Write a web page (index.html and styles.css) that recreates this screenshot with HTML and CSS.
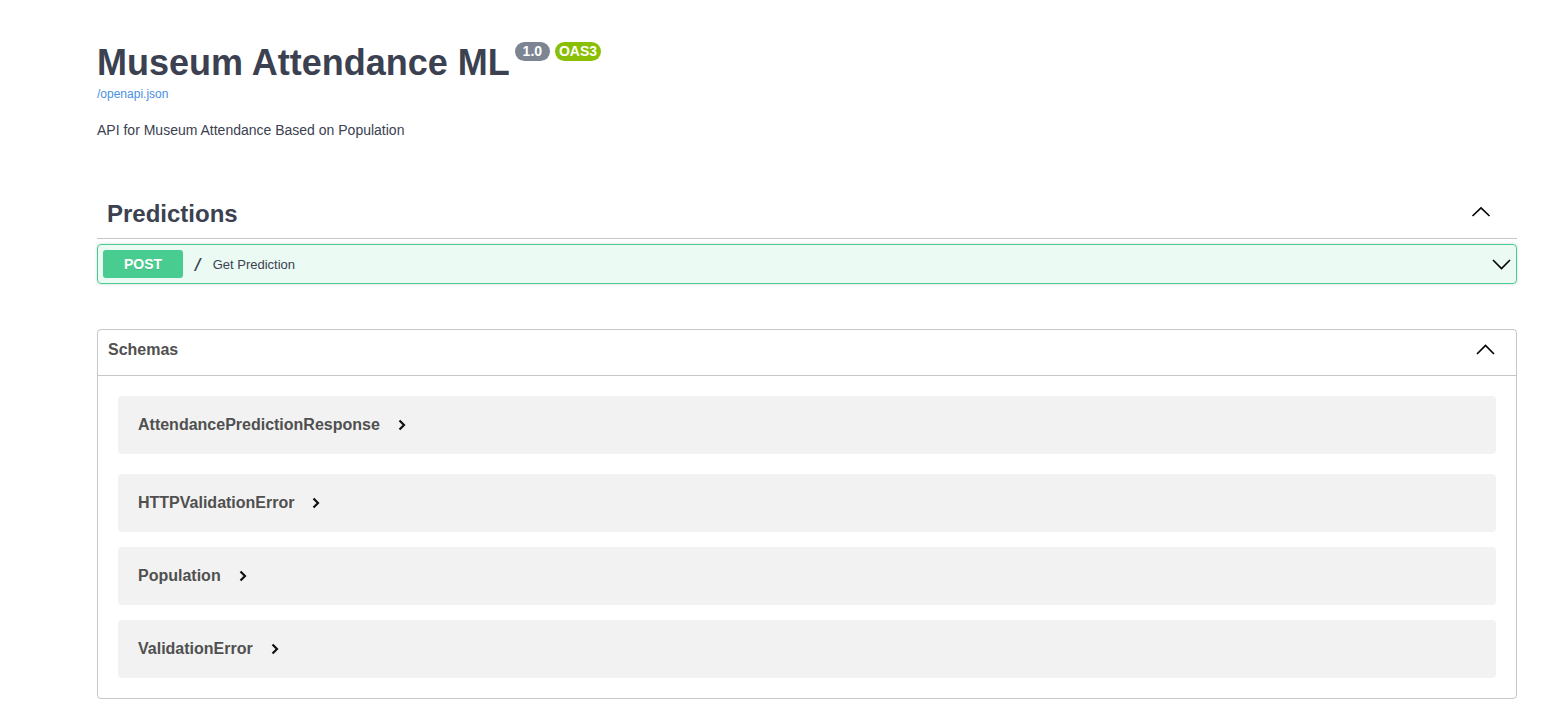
FILE: index.html
```html
<!DOCTYPE html>
<html lang="en">
<head>
<meta charset="utf-8">
<title>Museum Attendance ML - Swagger UI</title>
<link rel="stylesheet" href="styles.css">
</head>
<body>
<div class="wrapper">
  <div class="info">
    <h2 class="title">Museum Attendance ML<span class="badge badge-version"> 1.0 </span><span class="badge badge-oas">OAS3</span></h2>
    <a class="link" href="#">/openapi.json</a>
    <p class="desc">API for Museum Attendance Based on Population</p>
  </div>

  <div class="tag-section">
    <div class="tag-header">
      <h3 class="tag-name">Predictions</h3>
      <svg class="chev" width="20" height="20" viewBox="0 0 20 20"><polyline points="1.5,12 10,3.8 18.5,12" fill="none" stroke="#000" stroke-width="1.6"/></svg>
    </div>
    <div class="opblock">
      <span class="method">POST</span>
      <span class="path">/</span>
      <span class="summary">Get Prediction</span>
      <svg class="chev chev-end" width="20" height="20" viewBox="0 0 20 20"><polyline points="2,6 10.5,14.5 19,6" fill="none" stroke="#000" stroke-width="1.6"/></svg>
    </div>
  </div>

  <section class="models">
    <div class="models-header">
      <h4 class="models-title">Schemas</h4>
      <svg class="chev" width="20" height="20" viewBox="0 0 20 20"><polyline points="1,14 9.5,5.5 18,14" fill="none" stroke="#000" stroke-width="1.6"/></svg>
    </div>
    <div class="models-body">
      <div class="model first">
        <span class="model-title">AttendancePredictionResponse</span>
        <svg class="toggle" width="8" height="12" viewBox="0 0 8 12"><polyline points="1.5,1.5 6,6 1.5,10.5" fill="none" stroke="#111" stroke-width="2.2"/></svg>
      </div>
      <div class="model">
        <span class="model-title">HTTPValidationError</span>
        <svg class="toggle" width="8" height="12" viewBox="0 0 8 12"><polyline points="1.5,1.5 6,6 1.5,10.5" fill="none" stroke="#111" stroke-width="2.2"/></svg>
      </div>
      <div class="model">
        <span class="model-title">Population</span>
        <svg class="toggle" width="8" height="12" viewBox="0 0 8 12"><polyline points="1.5,1.5 6,6 1.5,10.5" fill="none" stroke="#111" stroke-width="2.2"/></svg>
      </div>
      <div class="model">
        <span class="model-title">ValidationError</span>
        <svg class="toggle" width="8" height="12" viewBox="0 0 8 12"><polyline points="1.5,1.5 6,6 1.5,10.5" fill="none" stroke="#111" stroke-width="2.2"/></svg>
      </div>
    </div>
  </section>
</div>
</body>
</html>
```
FILE: styles.css
```css
html, body {
  margin: 0;
  padding: 0;
  background: #fff;
}

body {
  font-family: "Liberation Sans", Arial, sans-serif;
  color: #3b4151;
}

.wrapper {
  width: 1420px;
  margin-left: 97px;
  padding-top: 42px;
  padding-bottom: 14px;
}

.info {
  display: flex;
  flex-direction: column;
  align-items: flex-start;
}

.title {
  margin: 0;
  font-size: 36px;
  line-height: 41px;
  font-weight: 700;
  color: #3b4151;
}

.badge {
  display: inline-block;
  vertical-align: top;
  margin-left: 5px;
  padding: 1px 4px 2px;
  font-size: 14px;
  line-height: 16px;
  font-weight: 700;
  color: #fff;
  border-radius: 57px;
  white-space: pre;
}

.badge-version {
  background: #7d8492;
}

.badge-oas {
  background: #89bf04;
}

.link {
  margin-top: 4px;
  font-size: 12px;
  line-height: 14px;
  color: #4990e2;
  text-decoration: none;
}

.desc {
  margin: 19px 0 0;
  font-size: 14px;
  line-height: 20px;
  color: #3b4151;
}

.tag-section {
  margin-top: 50px;
}

.tag-header {
  display: flex;
  align-items: center;
  justify-content: space-between;
  padding: 10px 26px 10px 10px;
  border-bottom: 1px solid rgba(59, 65, 81, 0.3);
  margin-bottom: 5px;
}

.tag-name {
  margin: 0;
  font-size: 24px;
  line-height: 28px;
  font-weight: 700;
  color: #3b4151;
}

.chev {
  display: block;
  flex: none;
}

.opblock {
  display: flex;
  align-items: center;
  padding: 5px;
  border: 1px solid #49cc90;
  border-radius: 4px;
  background: rgba(73, 204, 144, 0.1);
  box-shadow: 0 0 3px rgba(0, 0, 0, 0.19);
}

.method {
  width: 80px;
  height: 28px;
  line-height: 28px;
  text-align: center;
  background: #49cc90;
  color: #fff;
  font-size: 14px;
  font-weight: 700;
  border-radius: 3px;
  text-shadow: 0 1px 0 rgba(0, 0, 0, 0.1);
}

.path {
  padding: 0 10px;
  font-family: "DejaVu Sans Mono", monospace;
  font-size: 16px;
  font-weight: 600;
  color: #3b4151;
}

.summary {
  flex: 1;
  font-size: 13px;
  color: #3b4151;
}

.models {
  margin-top: 45px;
  border: 1px solid rgba(59, 65, 81, 0.3);
  border-radius: 4px;
}

.models-header {
  display: flex;
  align-items: center;
  justify-content: space-between;
  padding: 7px 20px 13px 10px;
  border-bottom: 1px solid rgba(59, 65, 81, 0.3);
}

.models-title {
  margin: 0;
  font-size: 16px;
  line-height: 25px;
  font-weight: 700;
  color: #505050;
}

.models-body {
  padding: 20px 0 5px;
}

.model {
  display: flex;
  align-items: center;
  height: 58px;
  margin: 0 20px 15px;
  padding: 0 20px;
  background: rgba(0, 0, 0, 0.05);
  border-radius: 4px;
}

.model.first {
  margin-bottom: 20px;
}

.model-title {
  font-size: 16px;
  font-weight: 700;
  color: #505050;
}

.toggle {
  display: block;
  margin-left: 18px;
}
```
